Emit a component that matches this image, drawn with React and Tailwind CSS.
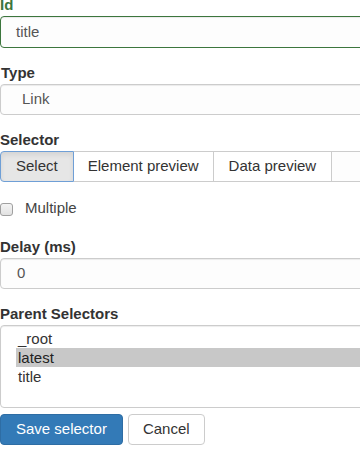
import React from 'react';

const labelCls = "block h-[20px] leading-[20px] font-bold mb-[1px]";
const inputCls = "w-full border rounded-[4px] bg-[#fdfdfd] shadow-[inset_0_1px_1px_rgba(0,0,0,0.075)] flex items-center text-[#555]";

export default function App() {
    const parents = ['_root', 'latest', 'title'];

    return (
        <div className="w-[360px] h-[459px] overflow-hidden bg-white text-[15px] text-[#333] font-['Liberation_Sans',Arial,sans-serif]">
            <div className="w-[430px] mt-[-5px]">
                {/* Id */}
                <div className="mb-[15px]">
                    <label className={`${labelCls} text-[#3c763d]`}>Id</label>
                    <div className={`${inputCls} h-[32px] border-[#3c763d] pl-[15px]`}>title</div>
                </div>

                {/* Type */}
                <div className="mb-[15px]">
                    <label className={`${labelCls} pl-[1px]`}>Type</label>
                    <div className={`${inputCls} h-[31px] border-[#ccc] pl-[21px]`}>Link</div>
                </div>

                {/* Selector */}
                <div>
                    <label className={labelCls}>Selector</label>
                    <div className="flex h-[31px]">
                        <div className="px-[15px] flex items-center bg-[#e6e6e6] border border-[#6f9fd6] rounded-l-[4px] text-[#333] shadow-[inset_0_3px_5px_rgba(0,0,0,0.08)]">Select</div>
                        <div className="px-[14px] flex items-center bg-white border-y border-r border-[#ccc]">Element preview</div>
                        <div className="px-[15px] flex items-center bg-white border-y border-r border-[#ccc]">Data preview</div>
                        <div className="flex-1 bg-[#fdfdfd] border-y border-[#ccc]" />
                    </div>
                </div>

                {/* Multiple */}
                <div className="mt-[16px] h-[20px] flex items-center">
                    <span className="w-[13px] h-[13px] mt-[2px] rounded-[3px] border border-[#a0a0a0] bg-gradient-to-b from-[#f4f4f4] to-[#e2e2e2]" />
                    <span className="ml-[12px] text-[#444]">Multiple</span>
                </div>

                {/* Delay */}
                <div className="mt-[19px] mb-[15px]">
                    <label className={labelCls}>Delay (ms)</label>
                    <div className={`${inputCls} h-[31px] border-[#ccc] pl-[16px]`}>0</div>
                </div>

                {/* Parent Selectors */}
                <div>
                    <label className={labelCls}>Parent Selectors</label>
                    <div className="h-[83px] border border-[#ccc] rounded-[4px] bg-white shadow-[inset_0_1px_1px_rgba(0,0,0,0.075)] pt-[3px] pl-[15px]">
                        {parents.map((p) => (
                            <div
                                key={p}
                                className={`h-[19px] leading-[19px] pl-[2px] ${p === 'latest' ? 'bg-[#c8c8c8] text-[#222]' : 'text-[#333]'}`}
                            >
                                {p}
                            </div>
                        ))}
                    </div>
                </div>

                {/* Buttons */}
                <div className="mt-[6px] flex">
                    <button className="h-[31px] px-[15px] bg-[#337ab7] border border-[#2e6da4] rounded-[4px] text-white">
                        Save selector
                    </button>
                    <button className="ml-[5px] h-[31px] px-[14px] bg-white border border-[#ccc] rounded-[4px] text-[#333]">
                        Cancel
                    </button>
                </div>
            </div>
        </div>
    );
}
